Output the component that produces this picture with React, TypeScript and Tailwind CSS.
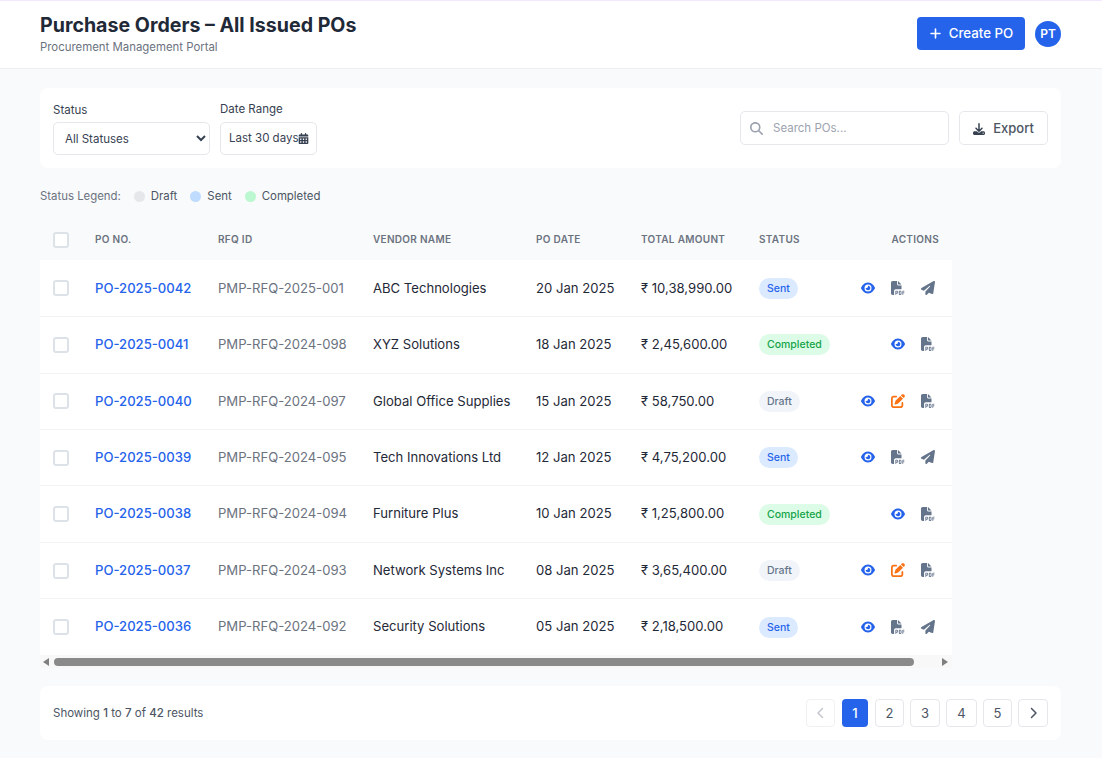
import { FaCalendarDays, FaChevronLeft, FaChevronRight, FaDownload, FaEye, FaFilePdf, FaMagnifyingGlass, FaPaperPlane, FaPenToSquare, FaPlus } from 'react-icons/fa6';

type Status = 'Sent' | 'Completed' | 'Draft';

const orders: { po: string; rfq: string; vendor: string; date: string; amount: string; status: Status }[] = [
  { po: 'PO-2025-0042', rfq: 'PMP-RFQ-2025-001', vendor: 'ABC Technologies', date: '20 Jan 2025', amount: '₹ 10,38,990.00', status: 'Sent' },
  { po: 'PO-2025-0041', rfq: 'PMP-RFQ-2024-098', vendor: 'XYZ Solutions', date: '18 Jan 2025', amount: '₹ 2,45,600.00', status: 'Completed' },
  { po: 'PO-2025-0040', rfq: 'PMP-RFQ-2024-097', vendor: 'Global Office Supplies', date: '15 Jan 2025', amount: '₹ 58,750.00', status: 'Draft' },
  { po: 'PO-2025-0039', rfq: 'PMP-RFQ-2024-095', vendor: 'Tech Innovations Ltd', date: '12 Jan 2025', amount: '₹ 4,75,200.00', status: 'Sent' },
  { po: 'PO-2025-0038', rfq: 'PMP-RFQ-2024-094', vendor: 'Furniture Plus', date: '10 Jan 2025', amount: '₹ 1,25,800.00', status: 'Completed' },
  { po: 'PO-2025-0037', rfq: 'PMP-RFQ-2024-093', vendor: 'Network Systems Inc', date: '08 Jan 2025', amount: '₹ 3,65,400.00', status: 'Draft' },
  { po: 'PO-2025-0036', rfq: 'PMP-RFQ-2024-092', vendor: 'Security Solutions', date: '05 Jan 2025', amount: '₹ 2,18,500.00', status: 'Sent' },
];

const statusStyles: Record<Status, string> = {
  Sent: 'bg-[#dbeafe] text-[#2563eb]',
  Completed: 'bg-[#dcfce7] text-[#16a34a]',
  Draft: 'bg-[#f1f5f9] text-[#64748b]',
};

const Checkbox = () => (
  <span className="block w-4 h-4 rounded-[3px] border-2 border-[#dde2e9] bg-white" />
);

const Actions = ({ status }: { status: Status }) => (
  <div className="mb-px flex items-center justify-end gap-4 text-sm text-[#64748b]">
    <FaEye className="text-[#2563eb]" />
    {status === 'Draft' && <FaPenToSquare className="text-[#f97316]" />}
    <FaFilePdf />
    {status === 'Sent' && <FaPaperPlane />}
  </div>
);

const App = () => {
  return (
    <div className="min-h-[758px] bg-[#f9fafb] font-['Inter',sans-serif] text-[#1f2937]">
      <header className="h-[69px] bg-white border-t border-t-[#f3e8ff] border-b border-b-[#eeeff1] pl-10 pr-[41px] pb-0.5 flex items-center justify-between">
        <div className="-mt-px">
          <h1 className="text-[19.6px] leading-7 font-bold">Purchase Orders – All Issued POs</h1>
          <p className="text-[11.4px] leading-4 text-[#6b7280]">Procurement Management Portal</p>
        </div>
        <div className="flex items-center gap-2.5">
          <button className="h-[33px] w-[108px] rounded bg-[#2563eb] text-white text-[13.3px] font-medium flex items-center justify-center gap-[7px]">
            <FaPlus className="text-[13px]" />
            Create PO
          </button>
          <div className="w-[26px] h-[26px] rounded-full bg-[#2563eb] text-white text-xs font-semibold flex items-center justify-center">PT</div>
        </div>
      </header>

      <main className="pl-10 pr-[41px] pt-[19px]">
        <section className="h-20 bg-white rounded-lg px-[13px] flex items-center justify-between">
          <div className="flex items-end gap-2.5">
            <div>
              <label className="block text-[11.5px] leading-4 text-[#374151] mb-1">Status</label>
              <select className="block w-[157px] h-[33px] rounded-[5px] border border-[#e5e7eb] bg-white pl-[7px] pr-2 text-[11.5px] text-[#374151]">
                <option>All Statuses</option>
              </select>
            </div>
            <div>
              <label className="block text-[11.5px] leading-4 text-[#374151] mb-[5px]">Date Range</label>
              <div className="w-[97px] h-[33px] rounded-[5px] border border-[#e5e7eb] pl-2 flex items-center text-[11.5px] text-[#374151] whitespace-nowrap">
                Last 30 days
                <FaCalendarDays className="text-[11px] shrink-0" />
              </div>
            </div>
          </div>
          <div className="flex items-center gap-2.5">
            <div className="w-[209px] h-[34px] rounded-[5px] border border-[#e5e7eb] pl-[9px] pt-px flex items-center gap-[10px] text-[11.5px] text-[#9ca3af]">
              <FaMagnifyingGlass className="text-[13px]" />
              Search POs...
            </div>
            <button className="w-[89px] h-[34px] rounded-[5px] border border-[#e5e7eb] pt-px text-[13px] text-[#4b5563] font-medium flex items-center justify-center gap-2">
              <FaDownload className="text-xs text-[#374151]" />
              Export
            </button>
          </div>
        </section>

        <div className="h-[51px] pt-[6px] flex items-center text-[11.4px] text-[#6b7280]">
          <span>Status Legend:</span>
          <span className="ml-[13px] flex items-center gap-1.5 text-[#4b5563]"><i className="w-[11px] h-[11px] rounded-full bg-[#e5e7eb]" />Draft</span>
          <span className="ml-[13px] flex items-center gap-1.5 text-[#4b5563]"><i className="w-[11px] h-[11px] rounded-full bg-[#bfdbfe]" />Sent</span>
          <span className="ml-[13px] flex items-center gap-1.5 text-[#4b5563]"><i className="w-[11px] h-[11px] rounded-full bg-[#bbf7d0]" />Completed</span>
        </div>

        <div className="w-[912px]">
          <table className="w-full table-fixed border-collapse">
            <colgroup>
              <col className="w-[42px]" />
              <col className="w-[123px]" />
              <col className="w-[155px]" />
              <col className="w-[163px]" />
              <col className="w-[105px]" />
              <col className="w-[117px]" />
              <col className="w-[105px]" />
              <col className="w-[102px]" />
            </colgroup>
            <thead>
              <tr className="h-[41.4px] bg-[#f9fafb] text-[10px] tracking-[0.03em] text-[#6b7280] text-left">
                <th className="pl-[13px]"><Checkbox /></th>
                <th className="pl-[13px] font-semibold">PO NO.</th>
                <th className="pl-[13px] font-semibold">RFQ ID</th>
                <th className="pl-[13px] font-semibold">VENDOR NAME</th>
                <th className="pl-[13px] font-semibold">PO DATE</th>
                <th className="pl-[13px] font-semibold">TOTAL AMOUNT</th>
                <th className="pl-[14px] font-semibold">STATUS</th>
                <th className="pr-[13px] font-semibold text-right">ACTIONS</th>
              </tr>
            </thead>
            <tbody className="bg-white text-[13.1px]">
              {orders.map((order) => (
                <tr key={order.po} className="h-[56.4px] border-b border-[#f1f2f4] last:border-b-0">
                  <td className="pl-[13px]"><Checkbox /></td>
                  <td className="pl-[13px] font-medium text-[#2563eb]">{order.po}</td>
                  <td className="pl-[13px] text-[#6b7280]">{order.rfq}</td>
                  <td className="pl-[13px] text-[#1f2937]">{order.vendor}</td>
                  <td className="pl-[13px] text-[#1f2937]">{order.date}</td>
                  <td className="pl-[13px] text-[#1f2937]">{order.amount}</td>
                  <td className="pl-[14px]">
                    <span className={`inline-block px-2 py-[3px] rounded-full text-[10.5px] leading-[15px] font-medium ${statusStyles[order.status]}`}>{order.status}</span>
                  </td>
                  <td className="pr-[17px]"><Actions status={order.status} /></td>
                </tr>
              ))}
            </tbody>
          </table>
          {/* horizontal scrollbar */}
          <div className="h-[13px] bg-[#f8f8f8] flex items-center">
            <span className="ml-[3px] w-0 h-0 border-y-[4px] border-y-transparent border-r-[6px] border-r-[#7f7f7f]" />
            <span className="ml-[5px] w-[860px] h-2 rounded-full bg-[#8a8a8a]" />
            <span className="ml-[28px] w-0 h-0 border-y-[4px] border-y-transparent border-l-[6px] border-l-[#7f7f7f]" />
          </div>
        </div>

        <section className="mt-[18px] h-[54px] bg-white rounded-lg px-[13px] flex items-center justify-between">
          <p className="text-[11.5px] text-[#4b5563]">
            Showing <span className="font-medium">1</span> to <span className="font-medium">7</span> of <span className="font-medium">42</span> results
          </p>
          <div className="flex items-center gap-1.5 text-[13px] text-[#4b5563]">
            <button className="mr-px h-[28px] w-[29px] rounded-[4px] border border-[#f0f1f3] flex items-center justify-center text-[#c4c8cf]"><FaChevronLeft className="text-xs" /></button>
            <button className="mr-px h-[28px] w-[26px] rounded-[4px] bg-[#2563eb] pt-px text-white font-medium">1</button>
            <button className="h-[28px] w-[29px] rounded-[4px] border border-[#e5e7eb] pt-px">2</button>
            <button className="h-[28px] w-[30px] rounded-[4px] border border-[#e5e7eb] pt-px">3</button>
            <button className="h-[28px] w-[31px] rounded-[4px] border border-[#e5e7eb] pt-px">4</button>
            <button className="h-[28px] w-[29px] rounded-[4px] border border-[#e5e7eb] pt-px">5</button>
            <button className="h-[28px] w-[30px] rounded-[4px] border border-[#e5e7eb] flex items-center justify-center"><FaChevronRight className="text-xs" /></button>
          </div>
        </section>
      </main>
    </div>
  );
};

export default App;
